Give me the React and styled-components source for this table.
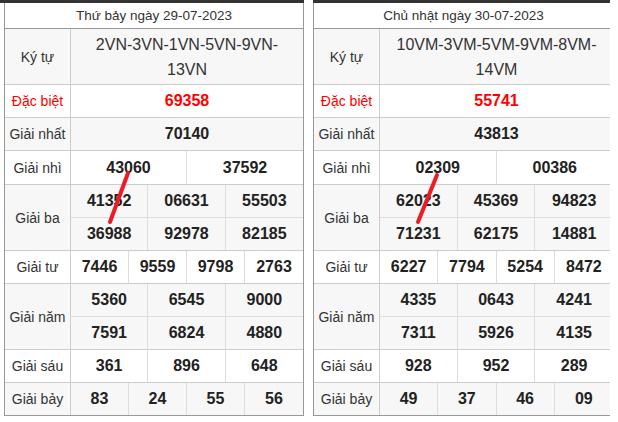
import React from 'react';
import styled, { createGlobalStyle } from 'styled-components';

const Global = createGlobalStyle`
  html, body { margin: 0; padding: 0; background: #fff; }
  body { font-family: "Liberation Sans", Arial, sans-serif; color: #333; }
  * { box-sizing: border-box; }
`;

const Page = styled.div`
  position: relative;
  display: flex;
  gap: 9px;
  width: 618px;
  height: 422px;
  background: #fff;
`;

const Block = styled.div`
  flex: none;
  width: ${(p) => p.$w}px;
  padding-left: ${(p) => p.$pl}px;
  border-top: 3px solid #333;
  overflow: hidden;
`;

const Table = styled.div`
  width: 300px;
  border: 1px solid #999;
  border-top: none;
  border-right: ${(p) => (p.$open ? 'none' : '1px solid #999')};
`;

const Header = styled.div`
  height: 26px;
  display: flex;
  align-items: center;
  justify-content: center;
  border-bottom: 1px solid #999;
  font-size: 13.5px;
  color: #333;
  background: #fff;
`;

const Row = styled.div`
  display: flex;
  background: ${(p) => (p.$alt ? '#f7f7f7' : '#fff')};
  border-bottom: ${(p) => (p.$last ? 'none' : '1px solid #ccc')};
`;

const Label = styled.div`
  flex: none;
  width: 66px;
  display: flex;
  align-items: center;
  justify-content: center;
  border-right: 1px solid #ccc;
  font-size: 14px;
  color: ${(p) => (p.$red ? '#f00' : '#333')};
  white-space: nowrap;
`;

const Series = styled.div`
  flex: 1;
  min-height: 55px;
  display: flex;
  align-items: center;
  justify-content: center;
  text-align: center;
  padding: 0 8px;
  font-size: 16px;
  line-height: 25px;
  color: #333;
`;

const Values = styled.div`
  flex: 1;
  display: grid;
  grid-template-columns: repeat(${(p) => p.$cols}, 1fr);
`;

const Cell = styled.div`
  box-sizing: content-box;
  height: ${(p) => p.$h}px;
  display: flex;
  align-items: center;
  justify-content: center;
  font-size: 16px;
  font-weight: bold;
  color: ${(p) => (p.$red ? '#f00' : '#222')};
  border-right: ${(p) => (p.$lastCol ? 'none' : '1px solid #ddd')};
  border-bottom: ${(p) => (p.$lastRow ? 'none' : '1px solid #ddd')};
`;

const Strokes = styled.svg`
  position: absolute;
  left: 0;
  top: 0;
  pointer-events: none;
`;

const NumberGrid = ({ nums, cols, red, h = 32 }) => {
  const rows = Math.ceil(nums.length / cols);
  return (
    <Values $cols={cols}>
      {nums.map((n, i) => (
        <Cell
          key={i}
          $h={h}
          $red={red}
          $lastCol={(i + 1) % cols === 0}
          $lastRow={Math.floor(i / cols) === rows - 1}
        >
          {n}
        </Cell>
      ))}
    </Values>
  );
};

const ResultTable = ({ d, open }) => (
  <Table $open={open}>
    <Header>{d.date}</Header>
    <Row $alt>
      <Label>Ký tự</Label>
      <Series>{d.kyTu}</Series>
    </Row>
    <Row>
      <Label $red>Đặc biệt</Label>
      <NumberGrid nums={[d.db]} cols={1} red />
    </Row>
    <Row $alt>
      <Label>Giải nhất</Label>
      <NumberGrid nums={[d.nhat]} cols={1} />
    </Row>
    <Row>
      <Label>Giải nhì</Label>
      <NumberGrid nums={d.nhi} cols={2} h={33} />
    </Row>
    <Row $alt>
      <Label>Giải ba</Label>
      <NumberGrid nums={d.ba} cols={3} />
    </Row>
    <Row>
      <Label>Giải tư</Label>
      <NumberGrid nums={d.tu} cols={4} />
    </Row>
    <Row $alt>
      <Label>Giải năm</Label>
      <NumberGrid nums={d.nam} cols={3} />
    </Row>
    <Row>
      <Label>Giải sáu</Label>
      <NumberGrid nums={d.sau} cols={3} />
    </Row>
    <Row $alt $last>
      <Label>Giải bảy</Label>
      <NumberGrid nums={d.bay} cols={4} />
    </Row>
  </Table>
);

const left = {
  date: 'Thứ bảy ngày 29-07-2023',
  kyTu: '2VN-3VN-1VN-5VN-9VN-13VN',
  db: '69358',
  nhat: '70140',
  nhi: ['43060', '37592'],
  ba: ['41352', '06631', '55503', '36988', '92978', '82185'],
  tu: ['7446', '9559', '9798', '2763'],
  nam: ['5360', '6545', '9000', '7591', '6824', '4880'],
  sau: ['361', '896', '648'],
  bay: ['83', '24', '55', '56'],
};

const right = {
  date: 'Chủ nhật ngày 30-07-2023',
  kyTu: '10VM-3VM-5VM-9VM-8VM-14VM',
  db: '55741',
  nhat: '43813',
  nhi: ['02309', '00386'],
  ba: ['62023', '45369', '94823', '71231', '62175', '14881'],
  tu: ['6227', '7794', '5254', '8472'],
  nam: ['4335', '0643', '4241', '7311', '5926', '4135'],
  sau: ['928', '952', '289'],
  bay: ['49', '37', '46', '09'],
};

export default function App() {
  return (
    <Page>
      <Global />
      <Block $w={304} $pl={4}>
        <ResultTable d={left} />
      </Block>
      <Block $w={297} $pl={0}>
        <ResultTable d={right} open />
      </Block>
      <Strokes width="618" height="422" viewBox="0 0 618 422">
        <line x1="128" y1="173" x2="110" y2="222" stroke="#ee1a24" strokeWidth="4" strokeLinecap="round" />
        <line x1="437" y1="175" x2="418" y2="222" stroke="#ee1a24" strokeWidth="4" strokeLinecap="round" />
      </Strokes>
    </Page>
  );
}
